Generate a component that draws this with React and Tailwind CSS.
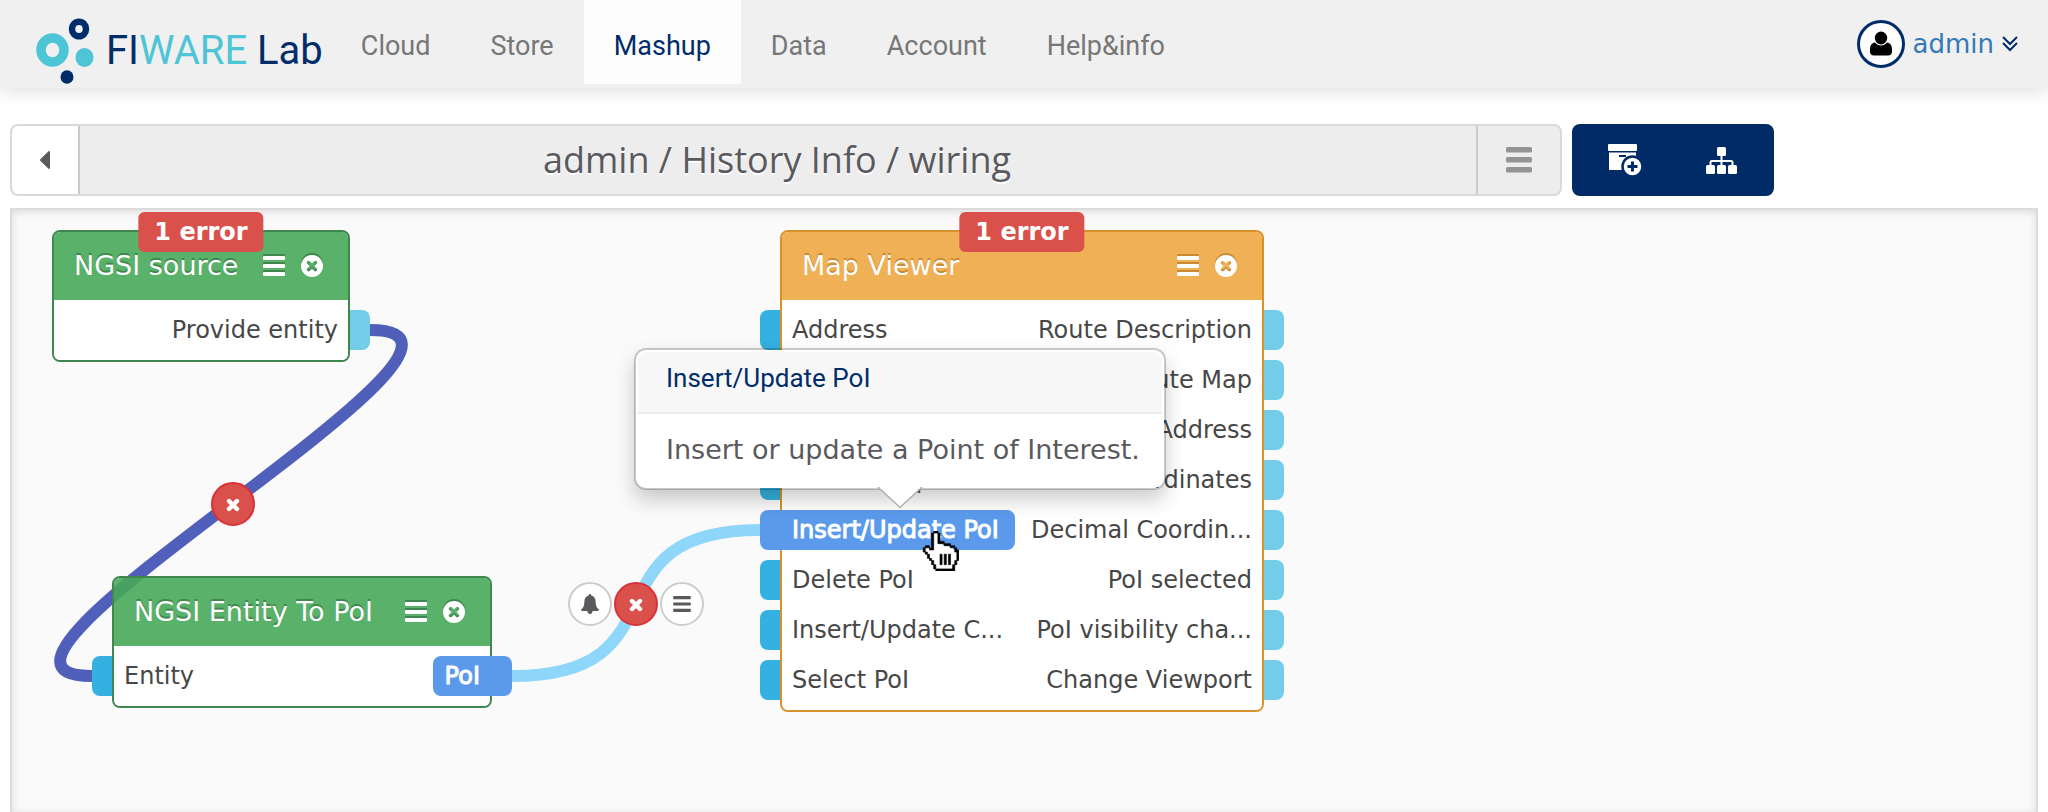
import React from "react";

const LABEL = "font-['DejaVu_Sans',Verdana,sans-serif]";
const BRAND = "font-[Roboto,sans-serif]";

function Bars({ className }) {
  return (
    <svg viewBox="0 0 22 20" className={className} fill="currentColor" aria-hidden="true">
      <rect x="0" y="0" width="22" height="4" rx="1" />
      <rect x="0" y="8" width="22" height="4" rx="1" />
      <rect x="0" y="16" width="22" height="4" rx="1" />
    </svg>
  );
}

function Cross() {
  return (
    <svg viewBox="0 0 14 14" className="mt-[2px] size-[14px]" stroke="currentColor" strokeWidth="4.4" strokeLinecap="round" aria-hidden="true">
      <path d="M3 3 11 11M11 3 3 11" />
    </svg>
  );
}

function CircleCross() {
  return (
    <svg viewBox="0 0 22 22" className="size-[22px]" aria-hidden="true">
      <mask id="cross-hole">
        <rect width="22" height="22" fill="white" />
        <path d="M7.6 7.6 14.4 14.4M14.4 7.6 7.6 14.4" stroke="black" strokeWidth="3.600" strokeLinecap="round" />
      </mask>
      <circle cx="11" cy="11" r="11" fill="currentColor" mask="url(#cross-hole)" />
    </svg>
  );
}

function Bell() {
  return (
    <svg viewBox="0 0 18 20" className="h-5 w-[18px]" fill="currentColor" aria-hidden="true">
      <path d="M9 0c.8 0 1.3.6 1.2 1.4C13 2 14.600 4.300 14.600 7.200c0 4.200 1 6.800 3.400 8.300 0 .9-.7 1.500-1.500 1.500h-4.900C11.500 18.700 10.400 20 9 20s-2.500-1.300-2.600-3H1.500C.7 17 0 16.400 0 15.500c2.400-1.500 3.400-4.100 3.400-8.300C3.400 4.300 5 2 7.800 1.400 7.700.6 8.200 0 9 0Z" />
    </svg>
  );
}

function Logo() {
  return (
    <a href="#home" className="flex items-center gap-[10px]" aria-label="FIWARE Lab">
      <svg viewBox="0 0 60 68" className="h-[68px] w-[60px]" aria-hidden="true">
        <ellipse cx="16.500" cy="33" rx="11.500" ry="12" fill="none" stroke="#4dc5d6" strokeWidth="9.500" />
        <ellipse cx="43" cy="12" rx="7" ry="7.300" fill="none" stroke="#002d6a" strokeWidth="6.500" />
        <ellipse cx="48.500" cy="40.500" rx="9" ry="9.500" fill="#4dc5d6" />
        <ellipse cx="31" cy="60" rx="6.500" ry="6.800" fill="#002d6a" />
      </svg>
      <span className={`${BRAND} text-[40px] leading-none whitespace-nowrap text-[#002d6a]`}>
        FI<span className="text-[#4dc5d6]">WARE</span> Lab
      </span>
    </a>
  );
}

const NAV = ["Cloud", "Store", "Mashup", "Data", "Account", "Help&info"];

function Header() {
  return (
    <header className="flex h-[88px] items-start bg-[#f0f0f0] pr-[30px] pl-[36px] shadow-[0_4px_16px_rgba(0,0,0,0.12)]">
      <div className="flex h-full items-center pt-[14px]"><Logo /></div>
      <nav className={`${BRAND} ml-2 flex h-[84px] flex-1 text-[27px]`}>
        {NAV.map((name) => (
          <a
            key={name}
            href={`#${name}`}
            className={
              name === "Mashup"
                ? "flex items-center bg-[#fdfdfd] px-[30px] pt-2 text-[#002d6a]"
                : "flex items-center px-[30px] pt-2 text-[#777777]"
            }
          >
            {name}
          </a>
        ))}
      </nav>
      <button type="button" className="flex h-[88px] items-center gap-2">
        <svg viewBox="0 0 48 48" className="size-12" aria-hidden="true">
          <circle cx="24" cy="24" r="22.500" fill="#fff" stroke="#002d6a" strokeWidth="3" />
          <ellipse cx="24" cy="18" rx="6.200" ry="6.500" />
          <path d="M18 22.500c1.500 2 3.500 3 6 3s4.500-1 6-3c3.500.5 5 3 5 7.500v1.500c0 2.500-1.500 4-4 4H17c-2.500 0-4-1.500-4-4V30c0-4.500 1.500-7 5-7.500Z" />
        </svg>
        <span className={`${LABEL} text-[26px] text-[#337ab7]`}>admin</span>
        <svg viewBox="0 0 16 16" className="size-4" fill="none" stroke="#002d6a" strokeWidth="2" aria-hidden="true">
          <path d="m1 1 7 7 7-7M1 7l7 7 7-7" />
        </svg>
      </button>
    </header>
  );
}

function Toolbar() {
  return (
    <div className="mt-9 flex h-[72px] gap-[10px] pr-[274px] pl-[10px]">
      <div className="flex flex-1 overflow-hidden rounded-lg border-2 border-[#dadada] bg-[#ededed]">
        <button type="button" aria-label="Back" className="-m-[2px] flex w-[70px] items-center justify-center rounded-l-lg border-2 border-[#cccccc] bg-white">
          <svg viewBox="0 0 10 18" className="h-[18px] w-[10px]" fill="#5a5a5e" aria-hidden="true">
            <path d="M10 1v16c0 1-1 1.300-1.700.6L.5 10c-.6-.6-.6-1.400 0-2L8.300.4C9-.3 10 0 10 1Z" />
          </svg>
        </button>
        <h1 className="flex flex-1 items-center justify-center font-['Open_Sans',sans-serif] text-[36px] text-[#5a5a5e] [text-shadow:0_2px_0_#fff]">
          admin / History Info / wiring
        </h1>
        <button type="button" aria-label="Menu" className="flex w-[84px] items-center justify-center border-l-2 border-[#cccccc] text-[#949494]">
          <svg viewBox="0 0 26 26" className="size-[26px]" fill="currentColor" aria-hidden="true">
            <rect x="0" y="0" width="26" height="5.500" rx="1.500" />
            <rect x="0" y="10" width="26" height="5.500" rx="1.500" />
            <rect x="0" y="20" width="26" height="5.500" rx="1.500" />
          </svg>
        </button>
      </div>
      <div className="flex w-[202px] items-center rounded-lg bg-[#002b66] text-white">
        <button type="button" aria-label="Add component" className="flex flex-1 justify-center pl-1">
          <svg viewBox="0 0 34 32" className="h-8 w-[34px]" fill="currentColor" aria-hidden="true">
            <rect x="0" y="0" width="29" height="7" rx="1" />
            <path d="M1 8.500h27V26H2c-.6 0-1-.4-1-1Z" />
            <path d="M11 12h7" stroke="#002b66" strokeWidth="2" />
            <circle cx="24.500" cy="22.500" r="10" fill="#fff" stroke="#002b66" strokeWidth="2.500" />
            <path d="M24.500 17.500v10M19.500 22.500h10" stroke="#002b66" strokeWidth="3" />
          </svg>
        </button>
        <button type="button" aria-label="Wiring" className="flex flex-1 justify-center pr-1">
          <svg viewBox="0 0 31 27" className="h-[27px] w-[31px]" fill="currentColor" aria-hidden="true">
            <rect x="11" y="0" width="9" height="9" rx="1.500" />
            <rect x="0" y="18" width="9" height="9" rx="1.500" />
            <rect x="11" y="18" width="9" height="9" rx="1.500" />
            <rect x="22" y="18" width="9" height="9" rx="1.500" />
            <path d="M15.500 8v11M4.500 19v-3.500q0-1.500 1.500-1.500h19q1.500 0 1.500 1.500V19" fill="none" stroke="currentColor" strokeWidth="2" />
          </svg>
        </button>
      </div>
    </div>
  );
}

const THEMES = {
  green: {
    box: "border-[#3f874f]",
    head: "bg-[rgba(71,169,90,0.9)] [text-shadow:0_-2px_0_#3f874f]",
    icon: "[filter:drop-shadow(0_-2px_0_#3f874f)]",
  },
  orange: {
    box: "border-[#d9922b]",
    head: "bg-[#f0b056] [text-shadow:0_-2px_0_#c98a35]",
    icon: "[filter:drop-shadow(0_-2px_0_#c98a35)]",
  },
};

function Endpoint({ side, children, active }) {
  const left = side === "left";
  if (active) {
    return (
      <div
        className={
          left
            ? "relative z-10 -ml-[22px] flex h-10 items-center self-start rounded-lg bg-[#5b9aeb] pr-4 pl-8 whitespace-nowrap text-white [-webkit-text-stroke:1px_#fff]"
            : "relative z-10 -mr-[22px] flex h-10 items-center self-end rounded-lg bg-[#5b9aeb] pr-8 pl-3 whitespace-nowrap text-white [-webkit-text-stroke:1px_#fff]"
        }
      >
        {children}
      </div>
    );
  }
  return (
    <div className={left ? "-ml-[22px] flex h-10 items-center gap-3" : "-mr-[22px] flex h-10 flex-row-reverse items-center gap-3"}>
      <span className={left ? "h-10 w-5 shrink-0 rounded-l-lg bg-[#34b1e0]" : "h-10 w-5 shrink-0 rounded-r-lg bg-[#73cde9]"} />
      <span className="whitespace-nowrap">{children}</span>
    </div>
  );
}

function Node({ title, theme, place, error, inputs = [], outputs = [], active }) {
  const t = THEMES[theme];
  return (
    <section className={`absolute ${place} rounded-lg border-2 ${t.box} ${LABEL} text-[24px] text-[#474747]`}>
      {error && (
        <div className="absolute -top-5 left-1/2 flex h-10 -translate-x-1/2 items-center rounded-md bg-[#da504b] px-4 text-[24px] font-bold whitespace-nowrap text-white">
          {error}
        </div>
      )}
      <header className={`flex h-[68px] items-center rounded-t-md pr-[25px] pl-5 text-white ${t.head}`}>
        <h2 className="flex-1 text-[27px] whitespace-nowrap">{title}</h2>
        <div className={`flex items-center gap-4 ${t.icon}`}>
          <button type="button" aria-label="Preferences"><Bars className="h-5 w-[22px]" /></button>
          <button type="button" aria-label="Remove"><CircleCross /></button>
        </div>
      </header>
      <div className="flex justify-between rounded-b-md bg-white py-[10px]">
        <div className="flex flex-col gap-[10px]">
          {inputs.map((n) => <Endpoint key={n} side="left" active={n === active}>{n}</Endpoint>)}
        </div>
        <div className="flex flex-col gap-[10px]">
          {outputs.map((n) => <Endpoint key={n} side="right" active={n === active}>{n}</Endpoint>)}
        </div>
      </div>
    </section>
  );
}

function Round({ place, tone, label, children }) {
  return (
    <button
      type="button"
      aria-label={label}
      className={`absolute ${place} flex size-11 items-center justify-center rounded-full border-2 ${
        tone === "red" ? "border-[#d9313a] bg-[#da504b] text-white" : "border-[#cccccc] bg-white text-[#5a5a5e]"
      }`}
    >
      {children}
    </button>
  );
}

function Popover() {
  return (
    <div role="tooltip" className="absolute top-[138px] left-[622px] z-20 w-[532px] rounded-xl border-2 border-black/20 bg-white bg-clip-padding p-[2px] shadow-[0_10px_20px_rgba(0,0,0,0.2)]">
      <h3 className={`${BRAND} h-[62px] rounded-t-lg border-b-2 border-[#ebebeb] bg-[#f7f7f7] pt-2 pl-7 text-[26px] leading-9 text-[#002d6a]`}>
        Insert/Update PoI
      </h3>
      <p className={`${LABEL} flex h-[72px] items-center pl-7 text-[27px] whitespace-nowrap text-[#5a5a5e]`}>
        Insert or update a Point of Interest.
      </p>
      <svg viewBox="0 0 46 22" className="absolute top-[137px] left-[241px] h-[22px] w-[46px]" aria-hidden="true">
        <path d="M1 0 23 20.500 45 0" fill="#fff" stroke="#b0b0b0" strokeWidth="1.500" />
        <path d="M3 0h40" stroke="#fff" strokeWidth="3" />
      </svg>
    </div>
  );
}

function Hand() {
  return (
    <svg viewBox="0 0 18 19" className="absolute top-[321px] left-[909px] z-30 h-[40px] w-[38px]" aria-hidden="true">
      <path d="M6 1h2v5h2v1h3v1h2v1h2v6h-1v3H8v-2H7v-2H6v-1H5v-1H4v-2H2V8h3v1h1Z" fill="#fff" stroke="#fff" strokeWidth="0.500" />
      <path d="M6 0h2v1H6zM5 1h1v8H5zM8 1h1v5H8zM9 5h2v1H9zM11 6h3v1h-3zM14 7h2v1h-2zM16 8h1v2h-1zM17 9h1v5h-1zM16 14h1v2h-1zM15 16h1v2h-1zM7 18h9v1H7zM6 16h1v2H6zM5 14h1v2H5zM4 13h1v1H4zM3 11h1v2H3zM2 10h1v1H2zM1 8h1v2H1zM2 7h2v1H2zM4 8h1v1H4zM9 11h1v5H9zM11 11h1v5h-1zM13 11h1v5h-1z" stroke="#000" strokeWidth="0.300" />
    </svg>
  );
}

export default function App() {
  return (
    <div className="flex min-h-screen flex-col overflow-hidden bg-white">
      <Header />
      <Toolbar />
      <main className="relative mx-[10px] mt-3 flex-1 border-2 border-b-0 border-[#dcdcdc] bg-[#fafafa] shadow-[inset_0_2px_8px_rgba(0,0,0,0.12)]">
        <svg className="absolute top-0 left-0 h-[600px] w-[1300px]" fill="none" strokeWidth="12" aria-hidden="true">
          <path d="M358 120C536 120-98 466 80 466" stroke="#5060ba" />
          <path d="M500 466C678 466 570 320 748 320" stroke="#8ed7fa" />
        </svg>
        <Node title="NGSI source" theme="green" place="top-5 left-10 w-[298px]" error="1 error" outputs={["Provide entity"]} />
        <Node title="NGSI Entity To PoI" theme="green" place="top-[366px] left-[100px] w-[380px]" inputs={["Entity"]} outputs={["PoI"]} active="PoI" />
        <Node
          title="Map Viewer"
          theme="orange"
          place="top-5 left-[768px] w-[484px]"
          error="1 error"
          inputs={["Address", "Route", "Coordinates", "Center Map", "Insert/Update PoI", "Delete PoI", "Insert/Update C...", "Select PoI"]}
          outputs={["Route Description", "Route Map", "Address", "Coordinates", "Decimal Coordin...", "PoI selected", "PoI visibility cha...", "Change Viewport"]}
          active="Insert/Update PoI"
        />
        <Round place="top-[272px] left-[199px]" tone="red" label="Remove connection"><Cross /></Round>
        <Round place="top-[372px] left-[556px]" label="Notifications"><Bell /></Round>
        <Round place="top-[372px] left-[602px]" tone="red" label="Remove connection"><Cross /></Round>
        <Round place="top-[372px] left-[648px]" label="Options"><Bars className="h-4 w-[18px]" /></Round>
        <Popover />
        <Hand />
      </main>
    </div>
  );
}
